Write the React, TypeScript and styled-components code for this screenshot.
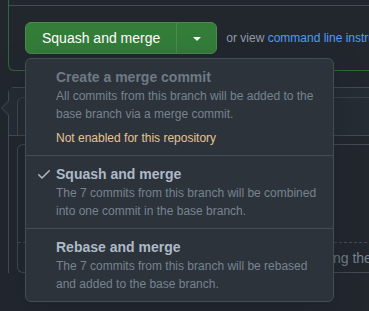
import styled, { createGlobalStyle } from "styled-components";

const GlobalStyle = createGlobalStyle`
    html, body {
        margin: 0;
        padding: 0;
        background: #22272e;
        overflow: hidden;
    }
    body {
        width: 369px;
        height: 311px;
        font-family: "Liberation Sans", Arial, sans-serif;
        color: #adbac7;
    }
`;

const Page = styled.div`
    width: 640px;
    padding-left: 8px;
`;

const MergeBox = styled.section`
    border: 1px solid #2f6a36;
    border-top: none;
    border-radius: 0 0 6px 6px;
`;

const PrevSection = styled.div`
    height: 5px;
    border-bottom: 1px solid #444c56;
`;

const ActionRow = styled.div`
    display: flex;
    align-items: center;
    gap: 9px;
    padding: 16px;
`;

const ButtonGroup = styled.div`
    position: relative;
    display: flex;
`;

const GreenButton = styled.button<{ $caret?: boolean }>`
    display: flex;
    align-items: center;
    justify-content: center;
    height: 32px;
    padding: ${({ $caret }) => ($caret ? "0" : "0 16px")};
    width: ${({ $caret }) => ($caret ? "41px" : "auto")};
    background: #347d39;
    color: #ffffff;
    font-family: inherit;
    font-size: 14px;
    border: 1px solid #4d8a50;
    border-radius: ${({ $caret }) => ($caret ? "0 6px 6px 0" : "6px 0 0 6px")};
    margin-left: ${({ $caret }) => ($caret ? "-1px" : "0")};
    cursor: pointer;
`;

const Hint = styled.span`
    font-size: 12px;
    color: #909dab;
    white-space: nowrap;

    & > a {
        color: #539bf5;
        text-decoration: none;
    }
`;

const Menu = styled.div`
    position: absolute;
    top: calc(100% + 4px);
    left: 0;
    z-index: 10;
    width: 309px;
    box-sizing: border-box;
    background: #2d333b;
    border: 1px solid #444c56;
    border-radius: 6px;
    box-shadow: 0 8px 24px rgba(28, 33, 40, 0.6);
`;

const MenuItem = styled.div<{ $disabled?: boolean }>`
    position: relative;
    padding: 8px 16px 8px 30px;
    border-top: 1px solid #444c56;
    color: ${({ $disabled }) => ($disabled ? "#6f7a86" : "#adbac7")};

    &:first-child {
        border-top: none;
    }
`;

const CheckIcon = styled.svg`
    position: absolute;
    left: 10px;
    top: 10px;
    fill: #adbac7;
`;

const ItemTitle = styled.div`
    font-size: 14px;
    line-height: 20px;
    font-weight: 700;
`;

const ItemDesc = styled.div`
    font-size: 12px;
    line-height: 18px;
    color: #768390;
`;

const ItemNote = styled.div`
    margin-top: 6px;
    font-size: 12px;
    line-height: 18px;
    color: #e6c394;
`;

const Timeline = styled.div`
    position: relative;
    margin-top: 16px;
    border-left: 1px solid #444c56;
    border-top: 1px solid #444c56;
    border-top-left-radius: 6px;
`;

const Pointer = styled.div`
    position: absolute;
    left: -8px;
    top: 12px;
    width: 0;
    height: 0;
    border-top: 8px solid transparent;
    border-bottom: 8px solid transparent;
    border-right: 8px solid #444c56;

    &::after {
        content: "";
        position: absolute;
        left: 1px;
        top: -7px;
        border-top: 7px solid transparent;
        border-bottom: 7px solid transparent;
        border-right: 7px solid #262c34;
    }
`;

const TimelineHeader = styled.div`
    height: 38px;
    padding: 9px 0 0 8px;
    background: #262c34;
    border-bottom: 1px solid #444c56;
`;

const HeaderInner = styled.div`
    height: 100%;
    border-left: 1px solid #444c56;
    border-top: 1px solid #3a424c;
    border-top-left-radius: 6px;
    box-sizing: border-box;
`;

const TimelineBody = styled.div`
    padding: 8px 0 0 8px;
`;

const InnerBox = styled.div`
    border: 1px solid #444c56;
    border-right: none;
    border-radius: 6px 0 0 6px;
`;

const InnerSpace = styled.div`
    height: 97px;
    border-bottom: 1px dashed #444c56;
`;

const InnerText = styled.div`
    height: 29px;
    display: flex;
    align-items: center;
    padding-left: 12px;
    font-size: 14px;
    color: #768390;
    white-space: nowrap;
`;

const options = [
    {
        title: "Create a merge commit",
        desc: "All commits from this branch will be added to the base branch via a merge commit.",
        note: "Not enabled for this repository",
        disabled: true,
    },
    {
        title: "Squash and merge",
        desc: "The 7 commits from this branch will be combined into one commit in the base branch.",
        checked: true,
    },
    {
        title: "Rebase and merge",
        desc: "The 7 commits from this branch will be rebased and added to the base branch.",
    },
];

const App = () => {
    return (
        <>
            <GlobalStyle />
            <Page>
                <MergeBox>
                    <PrevSection />
                    <ActionRow>
                        <ButtonGroup>
                            <GreenButton>Squash and merge</GreenButton>
                            <GreenButton $caret aria-label="Select merge method">
                                <svg width="16" height="16" viewBox="0 0 16 16" fill="#ffffff">
                                    <path d="m4.427 7.427 3.396 3.396a.25.25 0 0 0 .354 0l3.396-3.396A.25.25 0 0 0 11.396 7H4.604a.25.25 0 0 0-.177.427Z" />
                                </svg>
                            </GreenButton>
                            <Menu>
                                {options.map((o) => (
                                    <MenuItem key={o.title} $disabled={o.disabled}>
                                        {o.checked && (
                                            <CheckIcon width="16" height="16" viewBox="0 0 16 16">
                                                <path d="M13.78 4.22a.75.75 0 0 1 0 1.06l-7.25 7.25a.75.75 0 0 1-1.06 0L2.22 9.28a.751.751 0 0 1 .018-1.042.751.751 0 0 1 1.042-.018L6 10.94l6.72-6.72a.75.75 0 0 1 1.06 0Z" />
                                            </CheckIcon>
                                        )}
                                        <ItemTitle>{o.title}</ItemTitle>
                                        <ItemDesc>{o.desc}</ItemDesc>
                                        {o.note && <ItemNote>{o.note}</ItemNote>}
                                    </MenuItem>
                                ))}
                            </Menu>
                        </ButtonGroup>
                        <Hint>
                            or view <a href="#">command line instructions</a>.
                        </Hint>
                    </ActionRow>
                </MergeBox>
                <Timeline>
                    <Pointer />
                    <TimelineHeader>
                        <HeaderInner />
                    </TimelineHeader>
                    <TimelineBody>
                        <InnerBox>
                            <InnerSpace />
                            <InnerText>You can merge this with the command line by using the</InnerText>
                        </InnerBox>
                    </TimelineBody>
                </Timeline>
            </Page>
        </>
    );
};

export default App;
